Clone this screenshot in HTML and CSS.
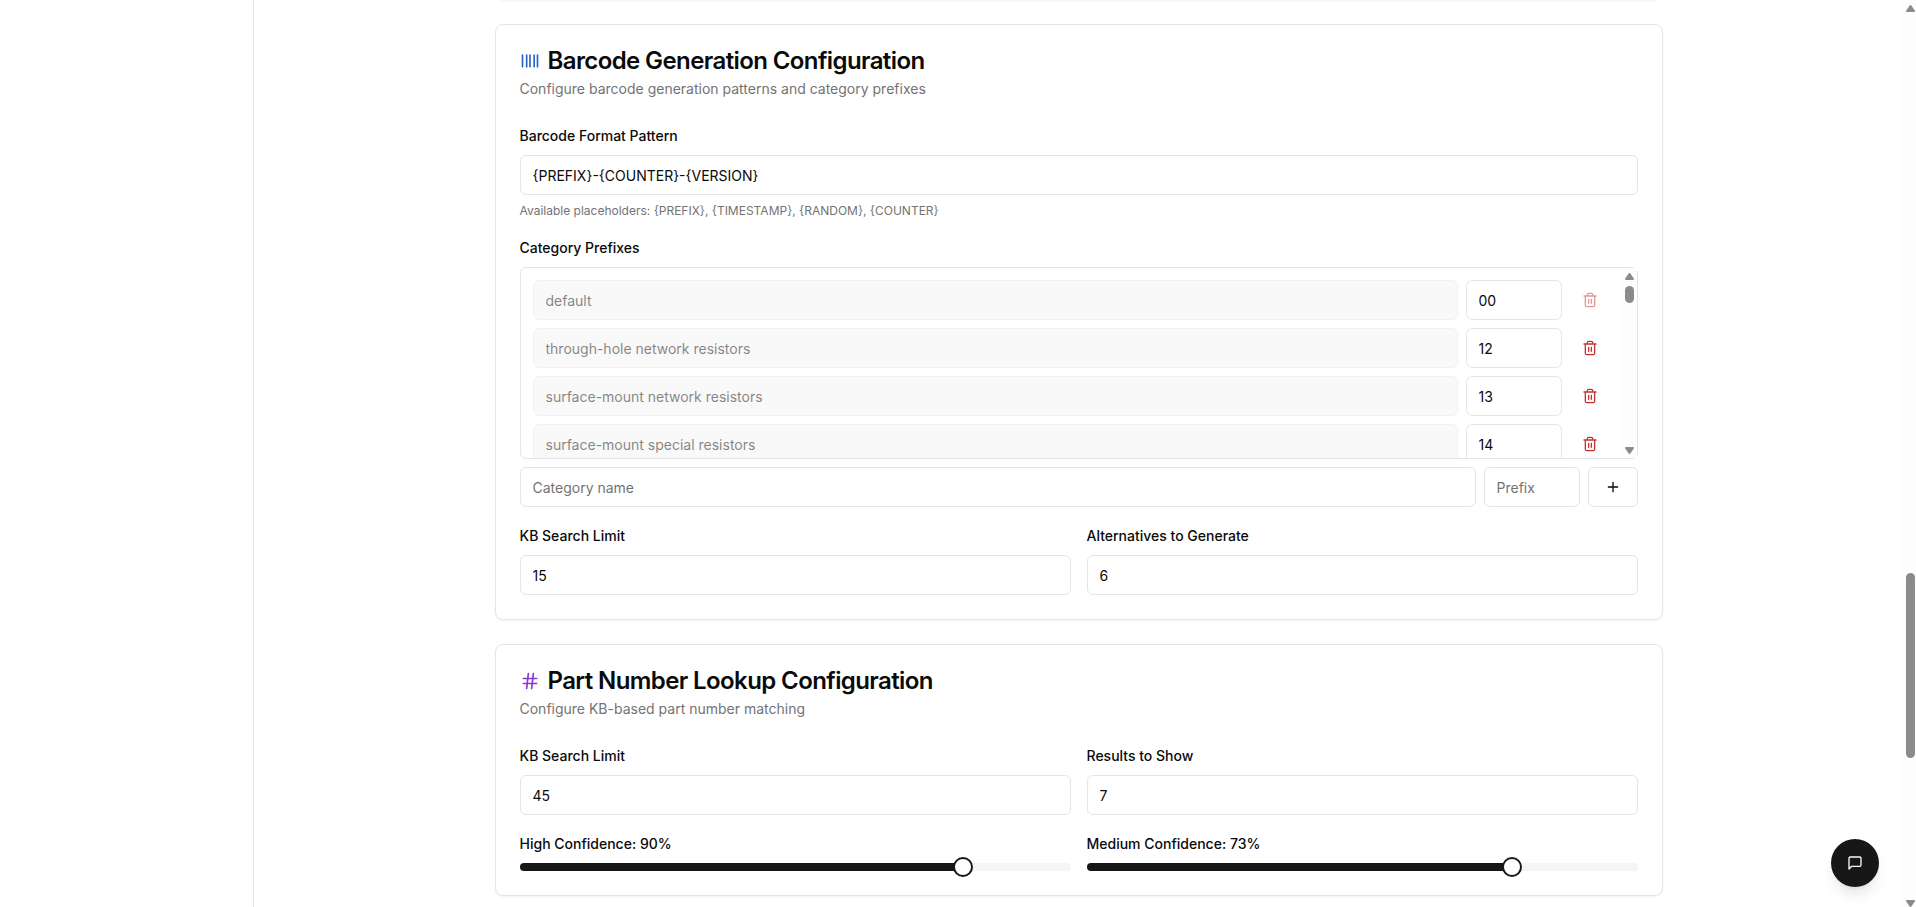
FILE: index.html
```html
<!DOCTYPE html>
<html lang="en">
  <head>
    <meta charset="UTF-8" />
    <meta name="viewport" content="width=device-width, initial-scale=1.0" />
    <title>Settings</title>
    <link rel="stylesheet" href="styles.css">
  </head>
  <body>
    <svg class="sprite" aria-hidden="true">
      <symbol id="icon-trash" viewBox="0 0 24 24">
        <path d="M3 6h18M19 6v14c0 1-1 2-2 2H7c-1 0-2-1-2-2V6M8 6V4c0-1 1-2 2-2h4c1 0 2 1 2 2v2M10 11v6M14 11v6" />
      </symbol>
    </svg>

    <aside class="sidebar"></aside>

    <main class="main">
      <section class="card card-previous"></section>

      <section class="card">
        <h3 class="card-title">
          <svg class="icon icon-lg blue" viewBox="0 0 24 24"><path d="M3 5v14M8 5v14M12 5v14M17 5v14M21 5v14" /></svg>
          Barcode Generation Configuration
        </h3>
        <p class="card-description">Configure barcode generation patterns and category prefixes</p>

        <div class="card-content">
          <div class="field">
            <label for="pattern">Barcode Format Pattern</label>
            <input type="text" id="pattern" value="{PREFIX}-{COUNTER}-{VERSION}" />
            <p class="hint">Available placeholders: {PREFIX}, {TIMESTAMP}, {RANDOM}, {COUNTER}</p>
          </div>

          <div class="field">
            <label>Category Prefixes</label>
            <div class="prefix-box">
              <div class="prefix-list">
                <div class="prefix-row">
                  <input type="text" value="default" disabled />
                  <input type="text" class="prefix" value="00" />
                  <button class="btn-ghost" disabled><svg class="icon"><use href="#icon-trash" /></svg></button>
                </div>
                <div class="prefix-row">
                  <input type="text" value="through-hole network resistors" disabled />
                  <input type="text" class="prefix" value="12" />
                  <button class="btn-ghost"><svg class="icon"><use href="#icon-trash" /></svg></button>
                </div>
                <div class="prefix-row">
                  <input type="text" value="surface-mount network resistors" disabled />
                  <input type="text" class="prefix" value="13" />
                  <button class="btn-ghost"><svg class="icon"><use href="#icon-trash" /></svg></button>
                </div>
                <div class="prefix-row">
                  <input type="text" value="surface-mount special resistors" disabled />
                  <input type="text" class="prefix" value="14" />
                  <button class="btn-ghost"><svg class="icon"><use href="#icon-trash" /></svg></button>
                </div>
              </div>
              <div class="scrollbar">
                <svg class="arrow" viewBox="0 0 9 7"><path d="M4.5 1 8 6H1z" /></svg>
                <div class="thumb-area"><div class="scroll-thumb list-thumb"></div></div>
                <svg class="arrow" viewBox="0 0 9 7"><path d="M4.5 6 8 1H1z" /></svg>
              </div>
            </div>
            <div class="prefix-row">
              <input type="text" placeholder="Category name" />
              <input type="text" class="prefix" placeholder="Prefix" />
              <button class="btn-outline"><svg class="icon" viewBox="0 0 24 24"><path d="M5 12h14M12 5v14" /></svg></button>
            </div>
          </div>

          <div class="columns">
            <div class="field">
              <label for="barcodeLimit">KB Search Limit</label>
              <input type="text" id="barcodeLimit" value="15" />
            </div>
            <div class="field">
              <label for="alternatives">Alternatives to Generate</label>
              <input type="text" id="alternatives" value="6" />
            </div>
          </div>
        </div>
      </section>

      <section class="card">
        <h3 class="card-title">
          <svg class="icon icon-lg purple" viewBox="0 0 24 24"><path d="M4 9h16M4 15h16M10 3 8 21M16 3l-2 18" /></svg>
          Part Number Lookup Configuration
        </h3>
        <p class="card-description">Configure KB-based part number matching</p>

        <div class="card-content">
          <div class="columns">
            <div class="field">
              <label for="lookupLimit">KB Search Limit</label>
              <input type="text" id="lookupLimit" value="45" />
            </div>
            <div class="field">
              <label for="results">Results to Show</label>
              <input type="text" id="results" value="7" />
            </div>
          </div>
          <div class="columns">
            <div class="field">
              <label>High Confidence: 90%</label>
              <div class="slider" style="--value: 0.816">
                <div class="slider-range"></div>
                <div class="slider-thumb"></div>
              </div>
            </div>
            <div class="field">
              <label>Medium Confidence: 73%</label>
              <div class="slider" style="--value: 0.782">
                <div class="slider-range"></div>
                <div class="slider-thumb"></div>
              </div>
            </div>
          </div>
        </div>
      </section>
    </main>

    <div class="scrollbar page-scrollbar">
      <svg class="arrow" viewBox="0 0 9 7"><path d="M4.5 1 8 6H1z" /></svg>
      <div class="thumb-area"><div class="scroll-thumb page-thumb"></div></div>
      <svg class="arrow" viewBox="0 0 9 7"><path d="M4.5 6 8 1H1z" /></svg>
    </div>

    <button class="chat-button">
      <svg class="icon" viewBox="0 0 24 24"><path d="M21 15a2 2 0 0 1-2 2H7l-4 4V5a2 2 0 0 1 2-2h14a2 2 0 0 1 2 2z" /></svg>
    </button>
  </body>
</html>
```

FILE: styles.css
```css
* {
  box-sizing: border-box;
}
body {
  display: flex;
  height: 100vh;
  margin: 0;
  overflow: hidden;
  background: #fff;
  color: #0a0a0a;
  font-family: Inter, sans-serif;
  font-size: 16px;
  line-height: 24px;
}
h3,
p {
  margin: 0;
}
.sprite {
  position: absolute;
  width: 0;
  height: 0;
}
.icon {
  width: 16px;
  height: 16px;
  flex-shrink: 0;
  fill: none;
  stroke: currentColor;
  stroke-width: 2;
  stroke-linecap: round;
  stroke-linejoin: round;
}
.icon-lg {
  width: 20px;
  height: 20px;
}
.blue {
  color: #2b64c8;
}
.purple {
  color: #8b35d2;
}

/* layout */
.sidebar {
  width: 254px;
  flex-shrink: 0;
  border-right: 1px solid #e5e5e5;
}
.main {
  flex: 1;
  display: flex;
  flex-direction: column;
  gap: 24px;
  padding: 0 238.5px 0 240.5px;
}
.card {
  flex-shrink: 0;
  padding: 24px;
  border: 1px solid #e5e5e5;
  border-radius: 8px;
  box-shadow: 0 1px 2px rgba(0, 0, 0, 0.05);
}
.card-previous {
  height: 60px;
  margin-top: -60px;
}
.card-title {
  display: flex;
  align-items: center;
  gap: 8px;
  font-size: 24px;
  font-weight: 600;
  line-height: 24px;
  letter-spacing: -0.6px;
}
.card-description {
  margin-top: 6px;
  color: #737373;
  font-size: 14px;
  line-height: 20px;
}
.card-content {
  display: flex;
  flex-direction: column;
  gap: 16px;
  margin-top: 24px;
}
.columns {
  display: grid;
  grid-template-columns: 1fr 1fr;
  gap: 16px;
}

/* form fields */
.field {
  display: flex;
  flex-direction: column;
  gap: 8px;
}
label {
  height: 24px;
  font-size: 14px;
  font-weight: 500;
  line-height: 25px;
}
input {
  width: 100%;
  min-width: 0;
  height: 40px;
  padding: 8px 12px;
  border: 1px solid #e5e5e5;
  border-radius: 6px;
  background: #fff;
  color: #0a0a0a;
  font-family: inherit;
  font-size: 14px;
  line-height: 20px;
}
input::placeholder {
  color: #737373;
}
input:disabled {
  background: #f5f5f5;
  opacity: 0.5;
}
.hint {
  color: #737373;
  font-size: 12px;
  line-height: 16px;
}

/* category prefixes */
.prefix-box {
  display: flex;
  height: 192px;
  border: 1px solid #e5e5e5;
  border-radius: 6px;
}
.prefix-list {
  flex: 1;
  display: flex;
  flex-direction: column;
  gap: 8px;
  padding: 12px;
  overflow: hidden;
}
.prefix-row {
  display: flex;
  flex-shrink: 0;
  align-items: center;
  gap: 8px;
}
.prefix {
  width: 96px;
  flex-shrink: 0;
}
button {
  display: flex;
  align-items: center;
  justify-content: center;
  flex-shrink: 0;
  padding: 0;
  border: none;
  background: none;
  cursor: pointer;
}
.btn-ghost {
  width: 40px;
  height: 36px;
  color: #c93434;
}
.btn-ghost:disabled {
  opacity: 0.5;
}
.btn-outline {
  width: 50px;
  height: 40px;
  border: 1px solid #e5e5e5;
  border-radius: 6px;
  color: #0a0a0a;
}

/* sliders */
.slider {
  position: relative;
  height: 8px;
  border-radius: 4px;
  background: #f5f5f5;
}
.slider-range {
  width: calc(var(--value) * 100%);
  height: 8px;
  border-radius: 4px 0 0 4px;
  background: #171717;
}
.slider-thumb {
  position: absolute;
  top: -6px;
  left: calc(var(--value) * (100% - 20px));
  width: 20px;
  height: 20px;
  border: 2px solid #171717;
  border-radius: 50%;
  background: #fff;
}

/* scrollbars */
.scrollbar {
  display: flex;
  flex-direction: column;
  align-items: center;
  flex-shrink: 0;
  width: 15px;
  padding: 5px 0 4px;
  background: #fdfdfd;
}
.arrow {
  width: 9px;
  height: 7px;
  fill: #8b8b8b;
  stroke: #8b8b8b;
  stroke-width: 2;
  stroke-linejoin: round;
}
.thumb-area {
  flex: 1;
}
.scroll-thumb {
  width: 9px;
  border-radius: 5px;
  background: #8b8b8b;
}
.list-thumb {
  height: 17px;
  margin-top: 6px;
}
.page-scrollbar {
  padding: 5px 0 0 4px;
}
.page-thumb {
  height: 185px;
  margin-top: 561px;
}

/* chat */
.chat-button {
  position: fixed;
  right: 37px;
  bottom: 20px;
  width: 48px;
  height: 48px;
  border-radius: 50%;
  background: #171717;
  color: #fafafa;
  box-shadow: 0 10px 15px -3px rgba(0, 0, 0, 0.1), 0 4px 6px -4px rgba(0, 0, 0, 0.1);
}
```
